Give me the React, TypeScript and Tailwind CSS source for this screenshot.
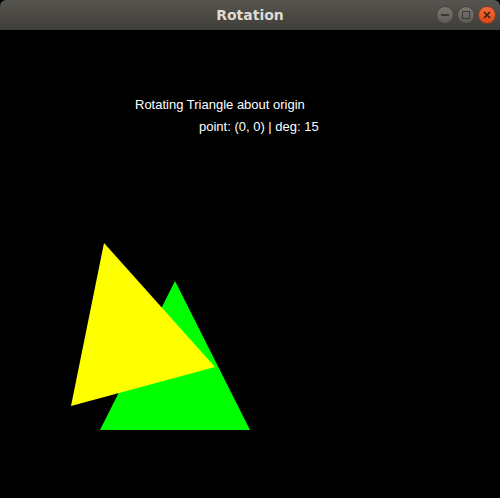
export default function App() {
  return (
    <div className="flex h-[498px] w-[500px] flex-col bg-black">
      {/* title bar */}
      <div className="relative flex h-[30px] shrink-0 items-center justify-center rounded-t-[6px] bg-gradient-to-b from-[#57554f] to-[#3f3e3a]">
        <span className="font-['DejaVu_Sans','Open_Sans',sans-serif] text-[14px] font-bold text-[#dfdbd2]">
          Rotation
        </span>
        <div className="absolute right-[4px] top-[6px] flex gap-[3px]">
          <button className="flex h-[18px] w-[18px] items-center justify-center rounded-full bg-gradient-to-b from-[#77766f] to-[#5d5c57] border border-[#403f3b]">
            <span className="block h-[1.5px] w-[8px] bg-[#3a3935]" />
          </button>
          <button className="flex h-[18px] w-[18px] items-center justify-center rounded-full bg-gradient-to-b from-[#77766f] to-[#5d5c57] border border-[#403f3b]">
            <span className="block h-[8px] w-[8px] border-[1.5px] border-[#3a3935]" />
          </button>
          <button className="flex h-[18px] w-[18px] items-center justify-center rounded-full bg-gradient-to-b from-[#f26a3a] to-[#df4a16] border border-[#8a3a1c]">
            <svg width="8" height="8" viewBox="0 0 8 8">
              <path d="M1 1L7 7M7 1L1 7" stroke="#3b1c10" strokeWidth="1.6" />
            </svg>
          </button>
        </div>
      </div>

      {/* canvas */}
      <div className="relative flex-1 font-['Liberation_Sans',Arial,sans-serif] text-white">
        <div className="absolute left-[135px] top-[68px] text-[13px] leading-[13px]">
          Rotating Triangle about origin
        </div>
        <div className="absolute left-[199px] top-[90px] text-[13px] leading-[13px]">
          point: (0, 0) | deg: 15
        </div>
        <svg className="absolute inset-0" width="500" height="468" viewBox="0 0 500 468">
          <polygon points="175,251 100,400 250,400" fill="#00ff00" />
          <polygon points="104,213 71,376 215,337" fill="#ffff00" />
        </svg>
      </div>
    </div>
  );
}
